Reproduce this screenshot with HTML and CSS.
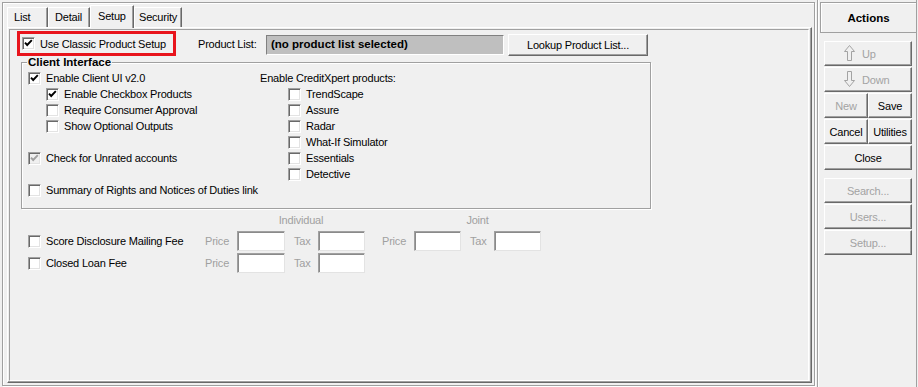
FILE: index.html
```html
<!DOCTYPE html>
<html>
<head>
<meta charset="utf-8">
<title>Setup</title>
<link rel="stylesheet" href="styles.css">
</head>
<body>
<div class="app">
  <div class="main">
    <div class="frame">
      <div class="tabs">
        <div class="tab t-list">List</div>
        <div class="tab t-detail">Detail</div>
        <div class="tab t-setup sel">Setup</div>
        <div class="tab t-security">Security</div>
      </div>
      <div class="page">
        <div class="inner">
          <div class="toprow">
            <div class="hl">
              <span class="cb"><svg viewBox="0 0 11 11"><polyline points="2,4.6 4.2,7 8.8,2.2"/></svg></span>
              <span class="cbl">Use Classic Product Setup</span>
            </div>
            <span class="pl-label">Product List:</span>
            <div class="pl-field">(no product list selected)</div>
            <button class="btn lookup">Lookup Product List...</button>
          </div>

          <div class="group">
            <div class="gtitle">Client Interface</div>
            <div class="gcols">
              <div class="col-left">
                <div class="row"><span class="cb"><svg viewBox="0 0 11 11"><polyline points="2,4.6 4.2,7 8.8,2.2"/></svg></span><span class="cbl">Enable Client UI v2.0</span></div>
                <div class="row ind"><span class="cb"><svg viewBox="0 0 11 11"><polyline points="2,4.6 4.2,7 8.8,2.2"/></svg></span><span class="cbl">Enable Checkbox Products</span></div>
                <div class="row ind"><span class="cb"></span><span class="cbl">Require Consumer Approval</span></div>
                <div class="row ind"><span class="cb"></span><span class="cbl">Show Optional Outputs</span></div>
                <div class="row"></div>
                <div class="row"><span class="cb dis"><svg viewBox="0 0 11 11"><polyline points="2,4.6 4.2,7 8.8,2.2"/></svg></span><span class="cbl">Check for Unrated accounts</span></div>
                <div class="row"></div>
                <div class="row"><span class="cb"></span><span class="cbl">Summary of Rights and Notices of Duties link</span></div>
              </div>
              <div class="col-right">
                <div class="row"><span>Enable CreditXpert products:</span></div>
                <div class="row ind2"><span class="cb"></span><span class="cbl">TrendScape</span></div>
                <div class="row ind2"><span class="cb"></span><span class="cbl">Assure</span></div>
                <div class="row ind2"><span class="cb"></span><span class="cbl">Radar</span></div>
                <div class="row ind2"><span class="cb"></span><span class="cbl">What-If Simulator</span></div>
                <div class="row ind2"><span class="cb"></span><span class="cbl">Essentials</span></div>
                <div class="row ind2"><span class="cb"></span><span class="cbl">Detective</span></div>
              </div>
            </div>
          </div>

          <div class="fees">
            <div class="fee-head">
              <span class="hcell">Individual</span>
              <span class="hcell joint">Joint</span>
            </div>
            <div class="fee-row">
              <div class="fee-name"><span class="cb"></span><span class="cbl">Score Disclosure Mailing Fee</span></div>
              <span class="flbl price">Price</span><span class="inp w48"></span>
              <span class="flbl tax">Tax</span><span class="inp"></span>
              <span class="flbl price gap">Price</span><span class="inp"></span>
              <span class="flbl tax">Tax</span><span class="inp"></span>
            </div>
            <div class="fee-row">
              <div class="fee-name"><span class="cb"></span><span class="cbl">Closed Loan Fee</span></div>
              <span class="flbl price">Price</span><span class="inp w48"></span>
              <span class="flbl tax">Tax</span><span class="inp"></span>
            </div>
          </div>
        </div>
      </div>
    </div>
  </div>

  <div class="actions">
    <div class="ahead">Actions</div>
    <div class="abtns">
      <button class="btn abtn dim iconbtn"><svg class="arrow" viewBox="0 0 11 17"><path d="M5.5 .5 L10.5 6.5 H7.5 V15.5 H3.5 V6.5 H.5 Z"/></svg><span>Up</span></button>
      <button class="btn abtn dim iconbtn"><svg class="arrow" viewBox="0 0 11 17"><path d="M3.5 .5 H7.5 V9.5 H10.5 L5.5 15.5 L.5 9.5 H3.5 Z"/></svg><span>Down</span></button>
      <div class="pair">
        <button class="btn abtn half dim">New</button>
        <button class="btn abtn half">Save</button>
      </div>
      <div class="pair">
        <button class="btn abtn half">Cancel</button>
        <button class="btn abtn half">Utilities</button>
      </div>
      <button class="btn abtn">Close</button>
      <button class="btn abtn dim sep">Search...</button>
      <button class="btn abtn dim">Users...</button>
      <button class="btn abtn dim">Setup...</button>
    </div>
  </div>
</div>
</body>
</html>
```

FILE: styles.css
```css
* { box-sizing: border-box; }
html, body { margin: 0; padding: 0; }
body {
  width: 918px;
  height: 387px;
  overflow: hidden;
  background: #f0f0f0;
  font: 11px "Liberation Sans", Arial, sans-serif;
  letter-spacing: -0.2px;
  color: #000;
}
.app { display: flex; height: 387px; }

/* ---------- left pane ---------- */
.main { width: 817px; padding: 2px 2px 1px 2px; }
.frame {
  height: 384px;
  border: 1px solid #a0a0a0;
  box-shadow: 1px 1px 0 #fff, inset 1px 1px 0 #fff;
  padding: 2px 2px 2px 4px;
  display: flex;
  flex-direction: column;
}
.tabs {
  height: 22px;
  display: flex;
  align-items: flex-end;
  position: relative;
  z-index: 1;
}
.tab {
  height: 20px;
  line-height: 19px;
  padding-left: 6px;
  border-top: 1px solid #fff;
  border-left: 1px solid #fff;
  border-right: 1px solid #696969;
  box-shadow: inset -1px 0 0 #a0a0a0;
  background: #f0f0f0;
}
.t-list { width: 41px; }
.t-detail { width: 42px; padding-left: 6px; }
.t-setup { width: 44px; }
.t-security { width: 48px; padding-left: 4px; }
.tab.sel {
  height: 23px;
  margin-bottom: -1px;
  line-height: 20px;
  padding-left: 7px;
}
.page {
  height: 356px;
  border: 1px solid;
  border-color: #fff #696969 #696969 #fff;
  box-shadow: inset -1px -1px 0 #a0a0a0;
  padding: 1px 2px 1px 1px;
}
.inner {
  height: 100%;
  border: 1px solid;
  border-color: #a0a0a0 #fff #fff #a0a0a0;
}

/* checkboxes */
.cb {
  flex: none;
  display: inline-block;
  width: 13px;
  height: 13px;
  background: #fff;
  border: 1px solid;
  border-color: #a0a0a0 #fff #fff #a0a0a0;
  box-shadow: inset 1px 1px 0 #696969, inset -1px -1px 0 #e3e3e3;
}
.cb svg { display: block; width: 11px; height: 11px; }
.cb polyline { fill: none; stroke: #000; stroke-width: 1.9; }
.cb.dis { background: #f0f0f0; }
.cb.dis polyline { stroke: #a0a0a0; }
.cbl { margin-left: 5px; white-space: nowrap; }

/* top row */
.toprow {
  display: flex;
  align-items: flex-start;
  margin-top: 1px;
  padding-left: 7px;
  height: 25px;
}
.hl {
  position: relative;
  z-index: 2;
  width: 159px;
  height: 25px;
  border: 3px solid #e8141c;
  padding-left: 2px;
  display: flex;
  align-items: center;
}
.pl-label {
  width: 68px;
  margin-left: 22px;
  line-height: 27px;
}
.pl-field {
  width: 238px;
  height: 20px;
  margin-top: 4px;
  background: #bfbfbf;
  border: 1px solid;
  border-color: #808080 #fff #fff #808080;
  font-weight: bold;
  line-height: 17px;
  padding-left: 4px;
  font-size: 11.5px;
  letter-spacing: 0;
}
.btn {
  font: inherit;
  letter-spacing: inherit;
  color: #000;
  background: #f0f0f0;
  border: 1px solid;
  border-color: #fff #696969 #696969 #fff;
  box-shadow: inset -1px -1px 0 #a0a0a0;
  padding: 0;
  margin: 0;
}
.lookup {
  width: 140px;
  height: 22px;
  margin-left: 4px;
  margin-top: 3px;
}

/* group box */
.group {
  position: relative;
  width: 630px;
  margin: 6px 0 0 11px;
  border: 1px solid #a0a0a0;
  box-shadow: 1px 1px 0 #fff, inset 1px 1px 0 #fff;
  padding: 7px 0 10px 6px;
}
.gtitle {
  position: absolute;
  top: -7px;
  left: 5px;
  padding: 0 1px;
  background: #f0f0f0;
  font-weight: bold;
  line-height: 13px;
  font-size: 11.5px;
  letter-spacing: 0;
}
.gcols { display: flex; }
.col-left { width: 232px; }
.row {
  height: 16px;
  display: flex;
  align-items: center;
  white-space: nowrap;
}
.row.ind { padding-left: 18px; }
.row.ind2 { padding-left: 28px; }

/* fees */
.fees { margin-left: 18px; }
.fee-head {
  display: flex;
  height: 14px;
  line-height: 14px;
  margin-top: 4px;
  padding-left: 209px;
  color: #a0a0a0;
}
.hcell { width: 128px; text-align: center; }
.hcell.joint { width: 127px; margin-left: 49px; }
.fee-row {
  display: flex;
  align-items: center;
  height: 22px;
}
.fee-head + .fee-row { margin-top: 3px; }
.fee-name {
  width: 177px;
  display: flex;
  align-items: center;
}
.flbl { color: #a0a0a0; }
.flbl.price { width: 32px; }
.flbl.tax { width: 24px; margin-left: 9px; }
.flbl.gap { margin-left: 17px; }
.inp {
  width: 47px;
  height: 20px;
  background: #fff;
  border: 1px solid;
  border-color: #a0a0a0 #e3e3e3 #e3e3e3 #a0a0a0;
  box-shadow: inset 1px 1px 0 #8a8a8a;
}
.inp.w48 { width: 48px; }

/* ---------- actions pane ---------- */
.actions {
  width: 100px;
  border-left: 1px solid #a0a0a0;
  border-right: 1px solid #a0a0a0;
  box-shadow: inset 1px 0 0 #fff;
  padding: 2px 0 0 1px;
}
.ahead {
  width: 97px;
  height: 31px;
  margin-left: 1px;
  border: 1px solid #a0a0a0;
  box-shadow: inset 1px 1px 0 #fff;
  display: flex;
  align-items: center;
  justify-content: center;
  font-weight: bold;
  font-size: 11.5px;
  letter-spacing: 0;
}
.abtns {
  width: 88px;
  margin: 8px 0 0 5px;
  display: flex;
  flex-direction: column;
  gap: 1px;
}
.abtn {
  display: block;
  width: 88px;
  height: 25px;
  text-align: center;
}
.abtn.dim { color: #a3a3a3; }
.abtn.sep { margin-top: 7px; }
.pair { display: flex; }
.abtn.half { width: 44px; }
.iconbtn {
  display: flex;
  align-items: center;
  padding-left: 19px;
  gap: 7px;
}
.arrow { width: 11px; height: 17px; display: block; }
.arrow path { fill: none; stroke: #a3a3a3; stroke-width: 1; }
```
